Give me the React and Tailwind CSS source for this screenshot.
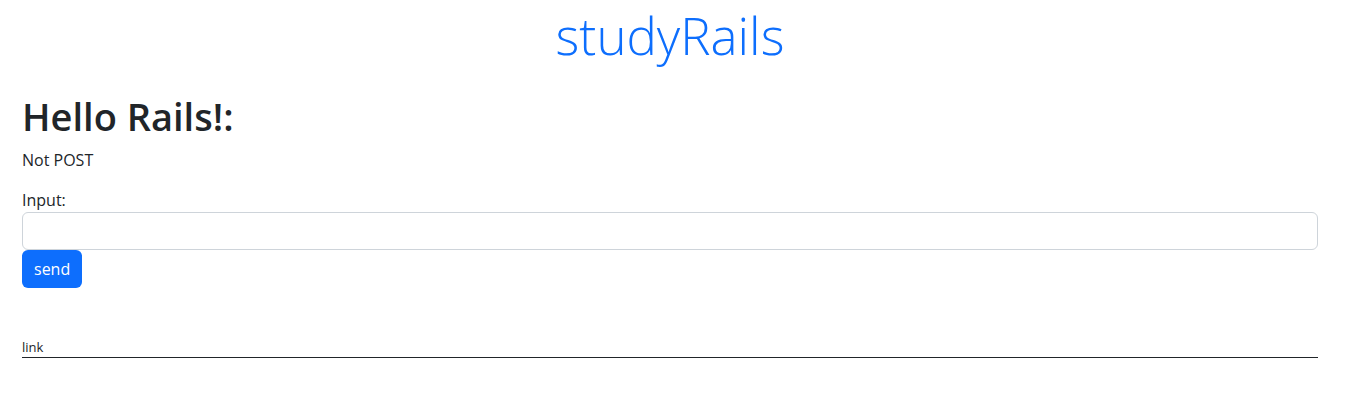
export default function App() {
  return (
    <div className="min-h-screen bg-white text-[#212529] font-['Open_Sans',sans-serif] text-base leading-6">
      <div className="w-[1296px] ml-[22px]">
        {/* Header */}
        <header className="text-center pt-[3px]">
          <h1 className="text-[51px] leading-[64px] font-light text-[#0d6efd]">studyRails</h1>
        </header>

        <main className="mt-[25px]">
          <h1 className="text-[38px] leading-[48px] font-semibold mb-2">Hello Rails!:</h1>
          <p className="mb-4">Not POST</p>

          <form>
            <label htmlFor="input" className="block">Input:</label>
            <input
              id="input"
              type="text"
              className="block w-full h-[38px] px-3 border border-[#ced4da] rounded-[6px] outline-none"
            />
            <button
              type="button"
              className="h-[38px] px-3 bg-[#0d6efd] text-white rounded-[6px]"
            >
              send
            </button>
          </form>

          {/* Footer link */}
          <div className="mt-[50px] border-b border-[#212529]">
            <a href="#" className="block text-[13px] leading-[19px]">link</a>
          </div>
        </main>
      </div>
    </div>
  );
}
